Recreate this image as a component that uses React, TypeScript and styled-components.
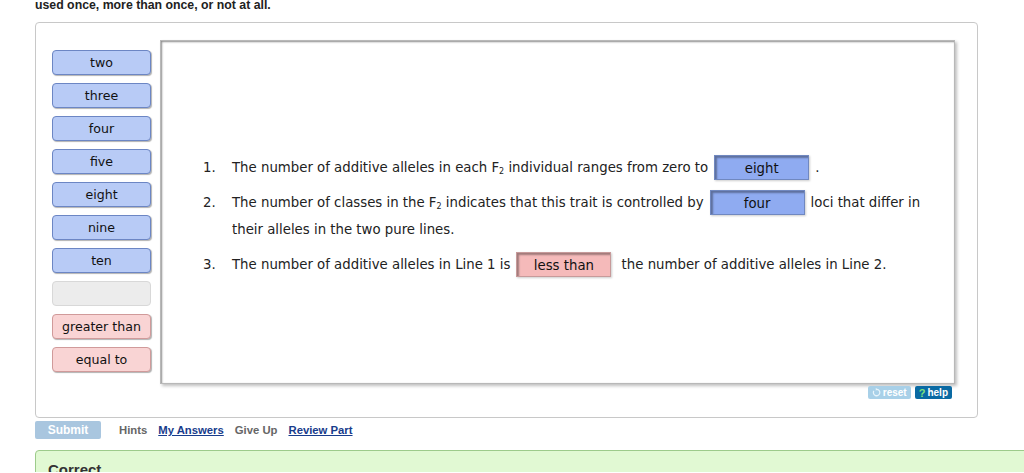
import React from "react";
import styled, { createGlobalStyle, css } from "styled-components";

const Global = createGlobalStyle`
  html, body { margin: 0; padding: 0; overflow: hidden; background: #fff; }
  body { font-family: "Liberation Sans", Arial, sans-serif; }
`;

const Page = styled.div`
  padding-left: 35px;
  width: 943px;
  height: 473px;
`;

const Intro = styled.p`
  margin: -1px 0 0 0;
  font-size: 12.3px;
  line-height: 13px;
  font-weight: bold;
  color: #222;
`;

const Card = styled.div`
  margin-top: 10px;
  border: 1px solid #c8c8c8;
  border-radius: 4px;
  padding: 17px 22px 18px 16px;
  display: flex;
  flex-direction: column;
`;

const Workspace = styled.div`
  display: flex;
  gap: 9px;
  align-items: flex-start;
`;

const Bank = styled.div`
  width: 99px;
  margin-top: 10px;
  display: flex;
  flex-direction: column;
  gap: 8px;
`;

type Tone = "blue" | "pink" | "empty";

const tones = {
  blue: css`
    background: #b8cbf6;
    border-color: #6c86c4;
  `,
  pink: css`
    background: #f9d4d4;
    border-color: #d09a9a;
  `,
  empty: css`
    background: #ececec;
    border-color: #d8d8d8;
    box-shadow: none;
  `,
};

const Pill = styled.div<{ $tone: Tone }>`
  height: 23px;
  border: 1px solid;
  border-radius: 4px;
  box-shadow: 1px 1px 1px rgba(0, 0, 0, 0.3);
  display: flex;
  align-items: center;
  justify-content: center;
  font-family: "DejaVu Sans", Verdana, sans-serif;
  font-size: 12.6px;
  color: #111;
  ${(p) => tones[p.$tone]}
`;

const Board = styled.div`
  flex: 1;
  height: 344px;
  border: 1px solid #b8b8b8;
  box-shadow: inset 1px 1px 2px rgba(0, 0, 0, 0.45), 2px 2px 3px rgba(0, 0, 0, 0.25);
  display: flex;
  align-items: center;
  padding-left: 42px;
  padding-top: 8px;
  box-sizing: border-box;
`;

const List = styled.ol`
  list-style: none;
  margin: 0;
  padding: 0;
  display: flex;
  flex-direction: column;
  gap: 8px;
  font-family: "DejaVu Sans", Verdana, sans-serif;
  font-size: 13.3px;
  color: #222;
`;

const Item = styled.li`
  display: grid;
  grid-template-columns: 29px 1fr;
  line-height: 27px;
`;

const Num = styled.span``;

const Sentence = styled.span`
  max-width: 720px;
`;

const Drop = styled.span<{ $tone: "blue" | "pink" }>`
  display: inline-block;
  text-align: center;
  vertical-align: middle;
  width: 95px;
  height: 25px;
  box-sizing: border-box;
  margin: 0 6px 0 6px;
  border: 1px solid ${(p) => (p.$tone === "blue" ? "#7088c0" : "#c79a9a")};
  background: ${(p) => (p.$tone === "blue" ? "#8fabf1" : "#f5baba")};
  box-shadow: inset 2px 2px 2px rgba(0, 0, 0, 0.35), 1px 1px 2px rgba(0, 0, 0, 0.2);
  color: #111;
  line-height: 24px;
  padding-top: 1px;
  position: relative;
  top: -1px;
`;

const Sub = styled.sub`
  font-size: 8px;
  vertical-align: -2px;
  line-height: 0;
`;

const Tools = styled.div`
  display: flex;
  justify-content: flex-end;
  gap: 4px;
  margin-top: 2px;
  margin-right: 3px;
`;

const ToolBtn = styled.span<{ $dark?: boolean }>`
  display: inline-flex;
  align-items: center;
  gap: 2px;
  height: 13px;
  padding: 0 4px;
  border-radius: 2px;
  font-size: 10px;
  font-weight: bold;
  color: #fff;
  background: ${(p) => (p.$dark ? "#0a6aa3" : "#a8d0e8")};
`;

const Q = styled.span`
  color: #7ee27e;
  font-size: 11px;
`;

const Actions = styled.div`
  display: flex;
  align-items: center;
  margin-top: 3px;
  font-size: 11.3px;
  font-weight: bold;
`;

const Submit = styled.span`
  width: 66px;
  height: 18px;
  border-radius: 2px;
  background: #a9c6df;
  color: #fff;
  font-size: 12px;
  display: flex;
  align-items: center;
  justify-content: center;
  margin-right: 18px;
`;

const Link = styled.span<{ $active?: boolean }>`
  margin-right: 11px;
  color: ${(p) => (p.$active ? "#183c8c" : "#666")};
  text-decoration: ${(p) => (p.$active ? "underline" : "none")};
`;

const Feedback = styled.div`
  margin-top: 11px;
  margin-right: -60px;
  height: 60px;
  border: 1px solid #9dcb8b;
  border-radius: 4px;
  background: #e1f9d3;
  padding: 10px 12px;
  font-size: 15px;
  font-weight: bold;
  color: #333;
`;

const ResetIcon = () => (
  <svg width="9" height="9" viewBox="0 0 10 10" fill="none">
    <path d="M2 3.2 A3.6 3.6 0 1 0 5 1.4" stroke="#e8f4fb" strokeWidth="1.4" />
    <path d="M4.2 0 L6.4 1.5 L4.2 3 Z" fill="#e8f4fb" />
  </svg>
);

const bank: { label: string; tone: Tone }[] = [
  { label: "two", tone: "blue" },
  { label: "three", tone: "blue" },
  { label: "four", tone: "blue" },
  { label: "five", tone: "blue" },
  { label: "eight", tone: "blue" },
  { label: "nine", tone: "blue" },
  { label: "ten", tone: "blue" },
  { label: "", tone: "empty" },
  { label: "greater than", tone: "pink" },
  { label: "equal to", tone: "pink" },
];

export default function App() {
  return (
    <>
      <Global />
      <Page>
        <Intro>used once, more than once, or not at all.</Intro>
        <Card>
          <Workspace>
            <Bank>
              {bank.map((b, i) => (
                <Pill key={i} $tone={b.tone}>
                  {b.label}
                </Pill>
              ))}
            </Bank>
            <Board>
              <List>
                <Item>
                  <Num>1.</Num>
                  <Sentence>
                    The number of additive alleles in each F<Sub>2</Sub> individual ranges from zero to
                    <Drop $tone="blue">eight</Drop>.
                  </Sentence>
                </Item>
                <Item>
                  <Num>2.</Num>
                  <Sentence>
                    The number of classes in the F<Sub>2</Sub> indicates that this trait is controlled by
                    <Drop $tone="blue">four</Drop>loci that differ in
                    <br />
                    their alleles in the two pure lines.
                  </Sentence>
                </Item>
                <Item>
                  <Num>3.</Num>
                  <Sentence>
                    The number of additive alleles in Line 1 is
                    <Drop $tone="pink">less than</Drop> the number of additive alleles in Line 2.
                  </Sentence>
                </Item>
              </List>
            </Board>
          </Workspace>
          <Tools>
            <ToolBtn>
              <ResetIcon />
              reset
            </ToolBtn>
            <ToolBtn $dark>
              <Q>?</Q>
              help
            </ToolBtn>
          </Tools>
        </Card>
        <Actions>
          <Submit>Submit</Submit>
          <Link>Hints</Link>
          <Link $active>My Answers</Link>
          <Link>Give Up</Link>
          <Link $active>Review Part</Link>
        </Actions>
        <Feedback>Correct</Feedback>
      </Page>
    </>
  );
}
